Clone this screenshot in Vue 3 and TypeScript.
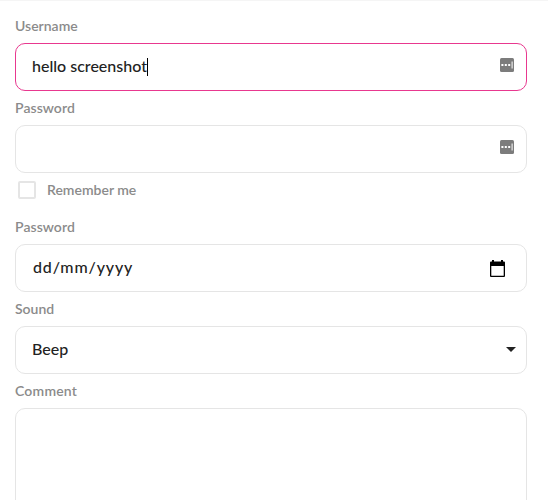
<script setup lang="ts">
import { ref } from 'vue'

const username = ref('hello screenshot')
const sound = ref('Beep')
const remember = ref(false)
</script>

<template>
  <form class="form" @submit.prevent>
    <div class="label username">Username</div>
    <div class="field focused">
      <span class="value user-value">{{ username }}</span><span class="caret"></span>
      <svg class="key" width="14" height="14" viewBox="0 0 14 14">
        <rect width="14" height="14" rx="1.5" fill="#7c7c7c" />
        <path d="M1.400 6h2v2h-2zM4.800 6h2v2h-2zM8.200 6h2v2h-2zM11.600 3.500h1v7h-1z" fill="#fff" />
      </svg>
    </div>

    <div class="label password">Password</div>
    <div class="field">
      <svg class="key" width="14" height="14" viewBox="0 0 14 14">
        <rect width="14" height="14" rx="1.5" fill="#7c7c7c" />
        <path d="M1.400 6h2v2h-2zM4.800 6h2v2h-2zM8.200 6h2v2h-2zM11.600 3.500h1v7h-1z" fill="#fff" />
      </svg>
    </div>

    <label class="remember">
      <input v-model="remember" type="checkbox" class="checkbox" />
      <span class="remember-text">Remember me</span>
    </label>

    <div class="label password">Password</div>
    <div class="field">
      <span class="value date-value">dd/mm/yyyy</span>
      <svg class="calendar" width="15" height="17" viewBox="0 0 15 17">
        <path d="M2 0h2v1.500h7V0h2v1.500h1a1 1 0 0 1 1 1V16a1 1 0 0 1-1 1H1a1 1 0 0 1-1-1V2.500a1 1 0 0 1 1-1h1zM1.300 6v9.700h12.400V6z" fill="#000" fill-rule="evenodd" />
      </svg>
    </div>

    <div class="label sound">Sound</div>
    <div class="field">
      <span class="value sound-value">{{ sound }}</span>
      <svg class="arrow" width="10" height="5" viewBox="0 0 10 5">
        <path d="M0 0h10L5 5z" fill="#222" />
      </svg>
    </div>

    <div class="label comment">Comment</div>
    <div class="field area"></div>
  </form>
</template>

<style>
body {
  margin: 0;
  background: #fff;
  overflow: hidden;
}
</style>

<style scoped>
.form {
  box-sizing: border-box;
  height: 500px;
  padding: 8px 21px 0 15px;
  border-top: 1px solid #f5f5f5;
  overflow: hidden;
  font-family: Lato, "Liberation Sans", sans-serif;
}
.label {
  height: 34px;
  line-height: 33px;
  font-size: 14px;
  font-weight: 600;
  color: #8b8b8b;
  white-space: nowrap;
}
.comment {
  letter-spacing: 0.2px;
}
.password {
  letter-spacing: 0.05px;
}
.field {
  box-sizing: border-box;
  display: flex;
  align-items: center;
  height: 48px;
  padding: 0 12px 0 16px;
  border: 1px solid #e5e5e5;
  border-radius: 10px;
}
.focused {
  border-color: #e8388f;
}
.value {
  margin-bottom: 2px;
  font-size: 16px;
  line-height: 20px;
  font-weight: 500;
  color: #222;
  white-space: nowrap;
}
.date-value {
  padding-left: 1px;
  letter-spacing: 0.85px;
}
.caret {
  width: 1px;
  height: 18px;
  background: #000;
}
.key {
  margin: 0 0 4px auto;
}
.calendar {
  margin: 0 9px 0 auto;
}
.arrow {
  margin: 0 -2px 1px auto;
}
.remember {
  display: flex;
  align-items: center;
  height: 34px;
  padding: 0 0 3px 3px;
}
.checkbox {
  appearance: none;
  box-sizing: border-box;
  width: 18px;
  height: 18px;
  margin: 0 11px 0 0;
  border: 2px solid #e5e5e5;
  border-radius: 2px;
}
.remember-text {
  margin-bottom: 2px;
  font-size: 14px;
  font-weight: 600;
  color: #8b8b8b;
}
.area {
  height: 120px;
}
</style>
